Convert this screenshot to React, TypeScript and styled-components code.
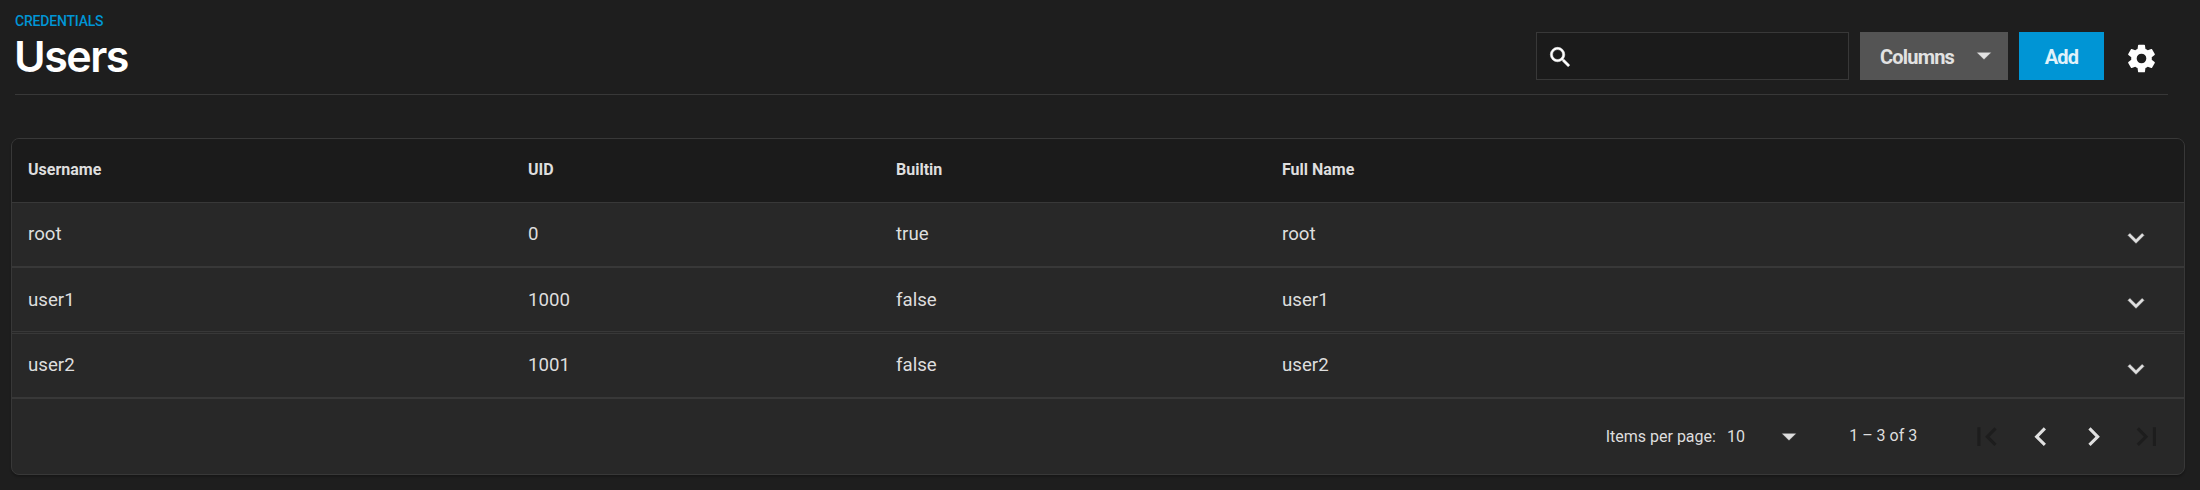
import React from "react";
import styled, { createGlobalStyle } from "styled-components";

const c = {
  bg: "#1e1e1e",
  panel: "#282828",
  dark: "#1b1b1b",
  line: "#383838",
  text: "#dedede",
  accent: "#0095d5",
};

const GlobalStyle = createGlobalStyle`
  * { box-sizing: border-box; }
  body {
    margin: 0;
    background: ${c.bg};
    color: ${c.text};
    font-family: Roboto, "Liberation Sans", sans-serif;
    overflow: hidden;
  }
`;

const Page = styled.main`
  display: flex;
  flex-direction: column;
  width: 2200px;
  height: 490px;
  padding: 0 15px 0 11px;
`;

const Header = styled.header`
  display: flex;
  justify-content: space-between;
  height: 95px;
  margin: 0 17px 0 4px;
  border-bottom: 1px solid ${c.line};
`;

const Heading = styled.div`
  display: flex;
  flex-direction: column;
  padding-top: 13px;
`;

const Breadcrumb = styled.a`
  color: ${c.accent};
  font-size: 14px;
  line-height: 17px;
  font-weight: 500;
  letter-spacing: -0.2px;
`;

const Title = styled.h1`
  margin: 0 0 0 -1px;
  color: #fff;
  font: 600 43px/52px Inter, Roboto, sans-serif;
  letter-spacing: -1.5px;
`;

const Toolbar = styled.div`
  display: flex;
  align-items: flex-start;
  padding: 32px 10px 0 0;
`;

const SearchBox = styled.label`
  display: flex;
  align-items: center;
  width: 313px;
  height: 48px;
  padding: 2px 0 0 10px;
  margin-right: 11px;
  background: ${c.dark};
  border: 1px solid ${c.line};
  color: #fff;
`;

const SearchInput = styled.input`
  flex: 1;
  min-width: 0;
  border: 0;
  outline: 0;
  background: transparent;
  color: inherit;
  font: 18px Roboto, sans-serif;
`;

const Button = styled.button<{ $primary?: boolean }>`
  display: flex;
  align-items: center;
  justify-content: ${(p) => (p.$primary ? "center" : "space-between")};
  width: ${(p) => (p.$primary ? 85 : 148)}px;
  height: 48px;
  margin: 0 ${(p) => (p.$primary ? 21 : 11)}px 0 0;
  padding: ${(p) => (p.$primary ? "0" : "0 8px 0 20px")};
  border: 0;
  background: ${(p) => (p.$primary ? c.accent : "#545454")};
  color: ${(p) => (p.$primary ? "#e0f2fa" : "#e2e2e2")};
  font: 700 20px/48px Roboto, sans-serif;
  letter-spacing: -0.8px;
`;

const ButtonLabel = styled.span`
  padding-top: 1px;
`;

const SettingsButton = styled.button`
  display: flex;
  margin-top: 9.5px;
  padding: 0;
  border: 0;
  background: none;
  color: #fff;
`;

const Card = styled.section`
  width: 2174px;
  height: 337px;
  margin-top: 43px;
  border: 1px solid ${c.line};
  border-radius: 8px;
  background: ${c.panel};
  box-shadow: 0 2px 2px rgba(0, 0, 0, 0.22);
  overflow: hidden;
`;

const Columns = styled.div`
  display: grid;
  grid-template-columns: 500px 368px 386px 1fr 32px;
  padding: 0 32.5px 0 16px;
`;

const HeadRow = styled(Columns)`
  height: 64px;
  background: ${c.dark};
  border-bottom: 1px solid ${c.line};
  font-size: 16px;
  line-height: 62px;
  font-weight: 700;
`;

const Row = styled(Columns)<{ $line: number }>`
  height: 65px;
  border-top: 1px solid ${c.line};
  border-bottom: 1px solid ${c.line};
  font-size: 18.67px;
  line-height: ${(p) => p.$line}px;
  &:nth-child(2) {
    height: 64px;
    border-top: 0;
  }
  &:nth-child(4) {
    margin-top: 1px;
  }
`;

const Expand = styled.button`
  display: flex;
  align-self: start;
  margin-top: 19px;
  padding: 0;
  border: 0;
  background: none;
  color: #e0e0e0;
`;

const Footer = styled.footer`
  display: flex;
  justify-content: flex-end;
  align-items: center;
  height: 76px;
  padding-right: 10.5px;
  border-top: 1px solid ${c.line};
  font-size: 16px;
`;

const PageSize = styled.div`
  display: flex;
  align-items: center;
  width: 243.5px;
`;

const SizeValue = styled.span`
  display: flex;
  align-items: center;
  justify-content: space-between;
  flex: 1;
  padding: 0 44px 0 11px;
`;

const Range = styled.span`
  width: 111px;
  padding-bottom: 2px;
`;

const PageButton = styled.button`
  display: flex;
  justify-content: center;
  width: 53.33px;
  padding: 0;
  border: 0;
  background: none;
  color: #e0e0e0;
  &:disabled { color: #1d1d1d; }
`;

const Svg = styled.svg<{ $bold: number }>`
  display: block;
  flex: none;
  fill: currentColor;
  stroke: currentColor;
  stroke-width: ${(p) => p.$bold};
`;

const paths = {
  search:
    "M9.5 3A6.5 6.5 0 0 1 16 9.5c0 1.61-.59 3.09-1.56 4.23l.27.27h.79l5 5-1.5 1.5-5-5v-.79l-.27-.27A6.516 6.516 0 0 1 9.5 16a6.5 6.5 0 0 1 0-13m0 2C7 5 5 7 5 9.5S7 14 9.5 14 14 12 14 9.5 12 5 9.5 5Z",
  settings:
    "M12 15.5A3.5 3.5 0 0 1 8.5 12 3.5 3.5 0 0 1 12 8.5a3.5 3.5 0 0 1 3.5 3.5 3.5 3.5 0 0 1-3.5 3.5m7.43-2.53c.04-.32.07-.64.07-.97s-.03-.66-.07-1l2.11-1.63c.19-.15.24-.42.12-.64l-2-3.46c-.12-.22-.39-.31-.61-.22l-2.49 1c-.52-.39-1.06-.73-1.69-.98l-.37-2.65A.506.506 0 0 0 14 2h-4c-.25 0-.46.18-.5.42l-.37 2.65c-.63.25-1.17.59-1.69.98l-2.49-1c-.22-.09-.49 0-.61.22l-2 3.46c-.13.22-.07.49.12.64L4.57 11c-.04.34-.07.67-.07 1s.03.65.07.97l-2.11 1.66c-.19.15-.25.42-.12.64l2 3.46c.12.22.39.3.61.22l2.49-1.01c.52.4 1.06.74 1.69.99l.37 2.65c.04.24.25.42.5.42h4c.25 0 .46-.18.5-.42l.37-2.65c.63-.26 1.17-.59 1.69-.99l2.49 1.01c.22.08.49 0 .61-.22l2-3.46c.12-.22.07-.49-.12-.64l-2.11-1.66Z",
  caret: "M7 9.5l5 5 5-5z",
  down: "M7.41 8.58L12 13.17l4.59-4.59L18 10l-6 6-6-6 1.41-1.42z",
  first: "M18.41 16.59L13.82 12l4.59-4.59L17 6l-6 6 6 6zM6 6h2v12H6z",
  prev: "M15.41 7.41L14 6l-6 6 6 6 1.41-1.41L10.83 12z",
  next: "M10 6L8.59 7.41 13.17 12l-4.58 4.59L10 18l6-6z",
  last: "M5.59 7.41L10.18 12l-4.59 4.59L7 18l6-6-6-6zM16 6h2v12h-2z",
};

type IconProps = { name: keyof typeof paths; size: number; bold?: number };

const Icon = ({ name, size, bold = 0 }: IconProps) => (
  <Svg $bold={bold} width={size} height={size} viewBox="0 0 24 24" aria-hidden="true">
    <path d={paths[name]} />
  </Svg>
);

const users = [
  { name: "root", uid: 0, builtin: true, full: "root", line: 62 },
  { name: "user1", uid: 1000, builtin: false, full: "user1", line: 64 },
  { name: "user2", uid: 1001, builtin: false, full: "user2", line: 62 },
];

export default function App() {
  return (
    <>
      <GlobalStyle />
      <Page>
        <Header>
          <Heading>
            <Breadcrumb>CREDENTIALS</Breadcrumb>
            <Title>Users</Title>
          </Heading>
          <Toolbar>
            <SearchBox>
              <Icon name="search" size={26.67} bold={0.45} />
              <SearchInput aria-label="Search" />
            </SearchBox>
            <Button>
              <ButtonLabel>Columns</ButtonLabel>
              <Icon name="caret" size={32} bold={0.25} />
            </Button>
            <Button $primary>
              <ButtonLabel>Add</ButtonLabel>
            </Button>
            <SettingsButton aria-label="Settings">
              <Icon name="settings" size={33} />
            </SettingsButton>
          </Toolbar>
        </Header>
        <Card>
          <HeadRow>
            <span>Username</span>
            <span>UID</span>
            <span>Builtin</span>
            <span>Full Name</span>
          </HeadRow>
          {users.map((u) => (
            <Row key={u.name} $line={u.line}>
              <span>{u.name}</span>
              <span>{u.uid}</span>
              <span>{String(u.builtin)}</span>
              <span>{u.full}</span>
              <Expand aria-label="Expand">
                <Icon name="down" size={32} bold={0.35} />
              </Expand>
            </Row>
          ))}
          <Footer>
            <PageSize>
              Items per page:
              <SizeValue>
                10
                <Icon name="caret" size={32} bold={0.25} />
              </SizeValue>
            </PageSize>
            <Range>1 – 3 of 3</Range>
            <PageButton disabled aria-label="First page"><Icon name="first" size={37.33} /></PageButton>
            <PageButton aria-label="Previous page"><Icon name="prev" size={37.33} /></PageButton>
            <PageButton aria-label="Next page"><Icon name="next" size={37.33} /></PageButton>
            <PageButton disabled aria-label="Last page"><Icon name="last" size={37.33} /></PageButton>
          </Footer>
        </Card>
      </Page>
    </>
  );
}
